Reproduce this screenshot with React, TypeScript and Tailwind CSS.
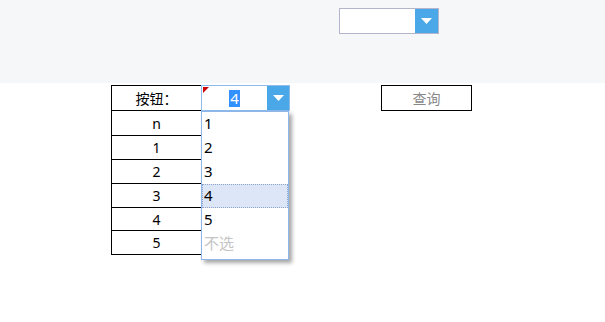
import { useState } from "react"

const Caret = () => (
  <svg width="11" height="6" viewBox="0 0 11 6">
    <path d="M0 0 H11 L5.5 6 Z" fill="#fff" />
  </svg>
)

const TopSelect = () => (
  <div className="flex w-[100px] h-[26px] border border-[#b2b5cc] bg-white">
    <div className="flex-1" />
    <div className="w-[23px] h-full bg-[#4aa8e8] flex items-center justify-center">
      <Caret />
    </div>
  </div>
)

const rows = ["n", "1", "2", "3", "4", "5"]
const rowHeights = ["h-[25px]", "h-[24px]", "h-[24px]", "h-[24px]", "h-[23px]", "h-[24px]"]
const options = ["1", "2", "3", "4", "5"]

export default function App() {
  const [value] = useState("4")

  return (
    <div className="w-[605px] h-[322px] bg-white text-[14px] text-black font-['Noto_Sans','Noto_Sans_CJK_SC',sans-serif]">
      <div className="h-[83px] bg-[#f6f7f9] pt-[8px] pl-[339px]">
        <TopSelect />
      </div>

      <div className="flex pl-[111px] pt-[2px]">
        <div className="w-[91px] border-l border-r border-t border-black">
          <div className="h-[25px] border-b border-black flex items-center justify-center">按钮：</div>
          {rows.map((r, i) => (
            <div key={r} className={`${rowHeights[i]} border-b border-black flex items-center justify-center`}>
              {r}
            </div>
          ))}
        </div>

        <div className="relative w-[89px] h-[26px] -ml-[1px]">
          <div className="flex h-full border border-[#8fbbec] bg-white">
            <div className="relative flex-1 flex items-center justify-center">
              <span className="absolute left-[1px] top-[1px] w-0 h-0 border-t-[6px] border-t-[#cc0000] border-r-[6px] border-r-transparent" />
              <span className="bg-[#3390ff] text-white text-[15px] leading-[17px] px-[1px]">{value}</span>
            </div>
            <div className="w-[22px] h-full bg-[#4aa8e8] flex items-center justify-center">
              <Caret />
            </div>
          </div>

          <div className="absolute left-0 top-full w-[88px] border border-[#8fb6ea] bg-white pb-[3px] text-[15px] shadow-[3px_3px_4px_rgba(0,0,0,0.35)]">
            {options.map((o) => (
              <div
                key={o}
                className={
                  o === value
                    ? "h-[24px] leading-[20px] pl-[1px] bg-[#dce6f6] border border-dotted border-[#8ea3c8]"
                    : "h-[24px] leading-[22px] pl-[2px]"
                }
              >
                {o}
              </div>
            ))}
            <div className="h-[24px] leading-[22px] pl-[2px] text-[#c4c4c4]">不选</div>
          </div>
        </div>

        <div className="ml-[91px] w-[91px] h-[26px] border border-black flex items-center justify-center text-[#888]">
          查询
        </div>
      </div>
    </div>
  )
}
